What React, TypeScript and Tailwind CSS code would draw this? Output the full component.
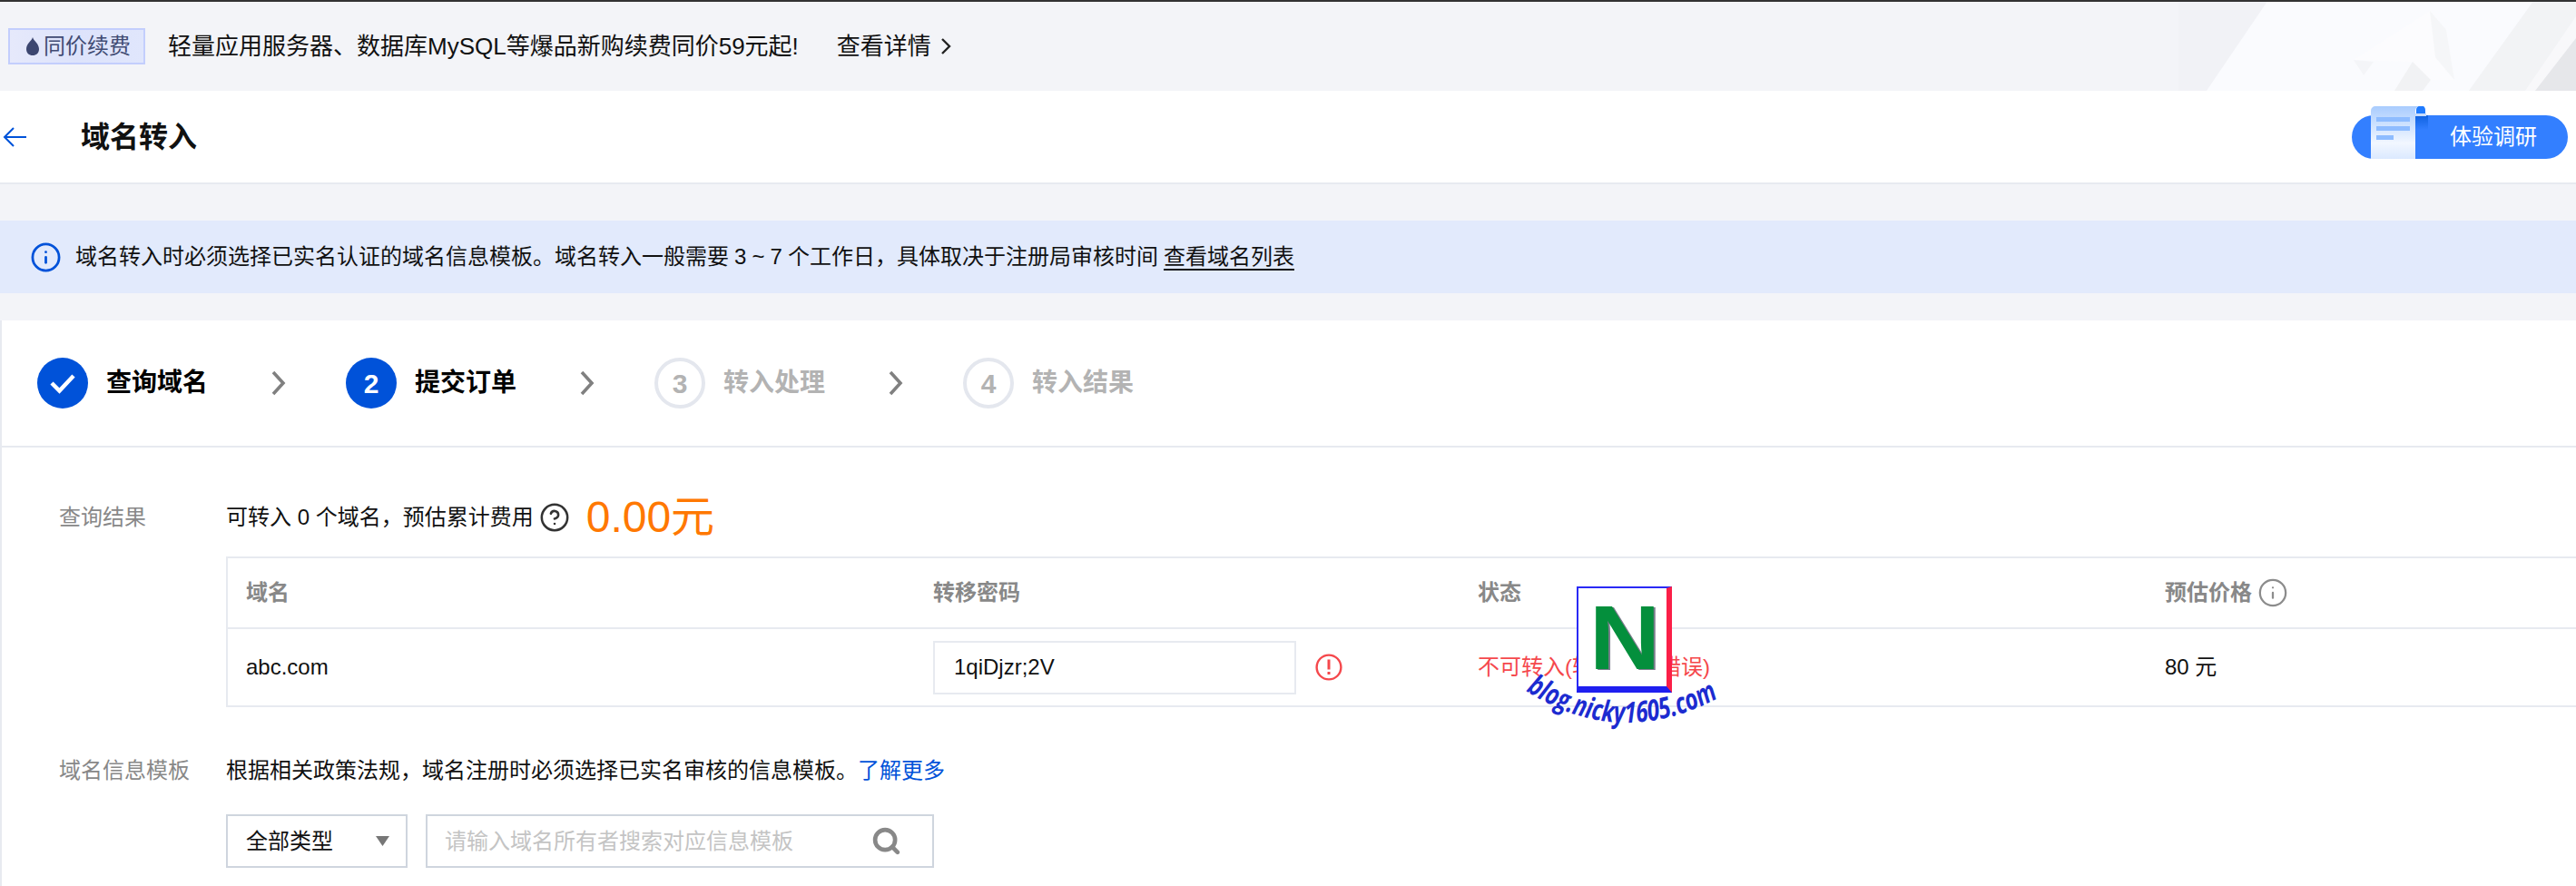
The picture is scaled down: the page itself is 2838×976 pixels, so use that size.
import { CircleHelp, Info, Search } from "lucide-react";

const steps = [
  { label: "查询域名", state: "done" },
  { label: "提交订单", state: "active", num: "2" },
  { label: "转入处理", state: "todo", num: "3" },
  { label: "转入结果", state: "todo", num: "4" },
];

// background art on the right of the banner
function BannerArt() {
  return (
    <svg className="absolute right-0 top-0 w-[438px] h-[98px]" viewBox="0 2 438 98">
      <polygon points="0,0 99,0 31,100 0,100" fill="#f1f2f6" />
      <polygon points="99,0 392,0 320,100 31,100" fill="#fafbfe" />
      <polygon points="392,0 438,0 438,18 382,100 320,100" fill="#f2f3f5" />
      <polygon points="438,18 438,42 393,100 382,100" fill="#f8f8fa" />
      <polygon points="438,42 438,100 393,100" fill="#e6e7ea" />
      <polygon points="193,66 277,12 295,33 304,88 278,88 269,100 238,100 258,68" fill="#fcfcfe" />
      <polygon points="277,12 295,33 304,88 283,63" fill="#f5f6f8" />
      <polygon points="193,66 215,68 204,83" fill="#f4f5f8" />
      <polygon points="258,68 238,100 269,100 278,88" fill="#f1f2f4" />
    </svg>
  );
}

function Step({ label, state, num, last }: { label: string; state: string; num?: string; last: boolean }) {
  const todo = state === "todo";
  return (
    <div className="flex items-center w-[340px] shrink-0">
      <div
        className={
          todo
            ? "w-[56px] h-[56px] rounded-full border-[4px] border-[#e4e7ee] flex items-center justify-center text-[30px] font-bold text-[#b3b3b3]"
            : "w-[56px] h-[56px] rounded-full bg-[#0052d9] flex items-center justify-center text-[30px] font-bold text-white"
        }
      >
        {state === "done" ? (
          <svg width="30" height="30" viewBox="0 0 30 30" fill="none" stroke="#fff" strokeWidth="4.5">
            <path d="M3 15 L11.5 23.5 L27 7" />
          </svg>
        ) : (
          num
        )}
      </div>
      <span className={todo ? "ml-[20px] w-[112px] text-[28px] font-bold text-[#b3b3b3]" : "ml-[20px] w-[112px] text-[28px] font-bold text-black"}>
        {label}
      </span>
      {!last && (
        <svg className="ml-[69px]" width="18" height="28" viewBox="0 0 18 28" fill="none" stroke="#808080" strokeWidth="3.6">
          <path d="M3 2 L14 14 L3 26" />
        </svg>
      )}
    </div>
  );
}

export default function App() {
  return (
    <div className="relative h-[976px] w-[2838px] overflow-hidden bg-[#f3f4f8] text-[24px] text-[#111] font-[family-name:'Liberation_Sans','Noto_Sans_CJK_SC',sans-serif]">
      <div className="h-[2px] bg-[#333]" />

      {/* top banner */}
      <div className="relative h-[98px] flex items-center pl-[9px] overflow-hidden">
        <BannerArt />
        <div className="h-[40px] w-[151px] flex items-center pl-[17px] border-2 border-[#c3cefd] bg-linear-to-r from-[#e6e9fb] via-[#dde3fb] to-[#e0e6fc] text-[#414b73]">
          <svg width="18" height="22" viewBox="0 0 18 22" fill="#3c4670" className="-ml-[1px] mr-[3px] shrink-0">
            <path d="M9 1 C10 5 16 8 16 14 C16 18.5 13 21 9 21 C5 21 2 18.5 2 14 C2 8 8 5 9 1 Z" />
          </svg>
          <span className="whitespace-nowrap">同价续费</span>
        </div>
        <span className="ml-[25px] text-[26px] text-[#111] whitespace-nowrap">轻量应用服务器、数据库MySQL等爆品新购续费同价59元起!</span>
        <span className="ml-[42px] text-[26px] text-[#111] whitespace-nowrap">查看详情</span>
        <svg className="ml-[10px]" width="12" height="20" viewBox="0 0 12 20" fill="none" stroke="#222" strokeWidth="2.4">
          <path d="M2 2 L10 10 L2 18" />
        </svg>
      </div>

      {/* page header */}
      <div className="h-[103px] bg-white border-b-2 border-[#e7eaf0] flex items-center pr-[9px]">
        <svg className="ml-[3px] shrink-0" width="26" height="24" viewBox="0 0 26 24" fill="none" stroke="#0052d9" strokeWidth="2">
          <path d="M12 2 L2 12 L12 22 M2 12 H26" />
        </svg>
        <h1 className="ml-[60px] text-[32px] font-bold text-[#111]">域名转入</h1>
        <div className="relative ml-auto h-[48px] w-[238px] rounded-full bg-[#337fff] flex items-center pl-[108px] text-white whitespace-nowrap">
          体验调研
          <svg className="absolute left-[21px] -top-[10px]" width="64" height="58" viewBox="0 0 64 58">
            <defs>
              <linearGradient id="paper" x1="0" y1="0" x2="0" y2="1">
                <stop offset="0" stopColor="#a9ccfe" />
                <stop offset="0.7" stopColor="#f2f7ff" />
                <stop offset="1" stopColor="#dbe9ff" />
              </linearGradient>
              <linearGradient id="curl" x1="0" y1="0" x2="0" y2="1">
                <stop offset="0" stopColor="#0f62e0" />
                <stop offset="1" stopColor="#337fff" />
              </linearGradient>
            </defs>
            <rect x="49" y="10" width="14" height="16" fill="url(#curl)" />
            <path d="M50 8 V4 A5 5 0 0 1 60 4 V8 Z" fill="#1f7bff" />
            <rect x="49" y="8" width="12" height="3" fill="#c8dcfb" />
            <path d="M0 58 V5 A5 5 0 0 1 5 0 H55 A5 5 0 0 0 49 5 V58 Z" fill="url(#paper)" />
            <rect x="6" y="12" width="37" height="5" fill="#8ebcff" />
            <rect x="6" y="22" width="37" height="5" fill="#8ebcff" />
            <rect x="6" y="32" width="19" height="5" fill="#8ebcff" />
          </svg>
        </div>
      </div>

      {/* notice */}
      <div className="mt-[40px] h-[80px] bg-[#e2eafc] flex items-center pl-[33px] whitespace-nowrap">
        <Info size={35} strokeWidth={1.9} color="#0052d9" className="shrink-0" />
        <span className="ml-[15px] [word-spacing:-0.6px]">域名转入时必须选择已实名认证的域名信息模板。域名转入一般需要 3 ~ 7 个工作日，具体取决于注册局审核时间</span>
        <span className="ml-[6px] underline decoration-2 underline-offset-[5px]">查看域名列表</span>
      </div>

      {/* main card */}
      <div className="mt-[30px] h-[623px] bg-white border-l-2 border-[#e7eaf0]">
        <div className="h-[140px] border-b-2 border-[#e7eaf0] flex items-center pl-[39px]">
          {steps.map((s, i) => (
            <Step key={s.label} label={s.label} state={s.state} num={s.num} last={i === steps.length - 1} />
          ))}
        </div>

        {/* query result */}
        <div className="flex pt-[40px]">
          <div className="w-[247px] shrink-0 pl-[63px] h-[74px] flex items-center text-[#888]">查询结果</div>
          <div className="flex-1">
            <div className="h-[74px] flex items-center whitespace-nowrap">
              <span>可转入 0 个域名，预估累计费用</span>
              <CircleHelp size={34} strokeWidth={1.8} color="#333" className="ml-[6px] shrink-0" />
              <span className="ml-[18px] text-[48px] text-[#ff7800]">0.00元</span>
            </div>
            <div className="mt-[6px] border-l-2 border-t-2 border-b-2 border-[#e7eaf0]">
              <div className="h-[78px] border-b-2 border-[#e7eaf0] grid grid-cols-[757px_600px_757px_1fr] items-center font-bold text-[#888]">
                <div className="pl-[20px]">域名</div>
                <div className="pl-[20px]">转移密码</div>
                <div className="pl-[20px]">状态</div>
                <div className="pl-[20px] flex items-center">
                  预估价格
                  <Info size={34} strokeWidth={1.6} color="#8c8c8c" className="ml-[6px]" />
                </div>
              </div>
              <div className="h-[84px] grid grid-cols-[757px_600px_757px_1fr] items-center">
                <div className="pl-[20px]">abc.com</div>
                <div className="pl-[20px] flex items-center">
                  <input
                    readOnly
                    value="1qiDjzr;2V"
                    className="h-[59px] w-[400px] border-2 border-[#e7eaf0] pl-[21px] outline-none text-[#111]"
                  />
                  <svg className="ml-[21px]" width="30" height="30" viewBox="0 0 30 30" fill="none" stroke="#f5484c" strokeWidth="2.4">
                    <circle cx="15" cy="15" r="13.4" />
                    <path d="M15 6.5 V17.5 M15 20 V23" strokeWidth="3" />
                  </svg>
                </div>
                <div className="pl-[20px] text-[#f5484c]">不可转入(转移密码错误)</div>
                <div className="pl-[20px]">80 元</div>
              </div>
            </div>
          </div>
        </div>

        {/* contact template */}
        <div className="flex mt-[46px]">
          <div className="w-[247px] shrink-0 pl-[63px] h-[48px] flex items-center text-[#888] whitespace-nowrap">域名信息模板</div>
          <div className="flex-1">
            <div className="h-[48px] flex items-center whitespace-nowrap">
              根据相关政策法规，域名注册时必须选择已实名审核的信息模板。
              <span className="text-[#0052d9]">了解更多</span>
            </div>
            <div className="mt-[24px] flex gap-[20px]">
              <div className="h-[59px] w-[200px] border-2 border-[#cfd5de] flex items-center pl-[20px] pr-[18px] justify-between">
                全部类型
                <svg width="15" height="11" viewBox="0 0 15 11" fill="#777">
                  <path d="M0 0 H15 L7.5 11 Z" />
                </svg>
              </div>
              <div className="h-[59px] w-[560px] border-2 border-[#cfd5de] flex items-center pl-[19px] pr-[34px] justify-between text-[#c4c4c4]">
                请输入域名所有者搜索对应信息模板
                <Search size={33} strokeWidth={3.4} color="#888" />
              </div>
            </div>
          </div>
        </div>
      </div>

      {/* watermark logo over the page */}
      <div className="absolute left-[1737px] top-[646px] w-[105px] h-[117px] bg-white border-l-2 border-t-2 border-b-[7px] border-r-[6px] border-l-[#2a2af5] border-t-[#2a2af5] border-b-[#1f1ff0] border-r-[#fb1f47]" />
      <svg className="absolute left-[1670px] top-[640px] w-[240px] h-[190px]" viewBox="1670 640 240 190">
        <text x="1751" y="737" fontFamily="Liberation Sans" fontWeight="bold" fontSize="100" textLength="78" lengthAdjust="spacingAndGlyphs" fill="#7c7c8c" dx="2" dy="1">
          N
        </text>
        <text x="1751" y="737" fontFamily="Liberation Sans" fontWeight="bold" fontSize="100" textLength="78" lengthAdjust="spacingAndGlyphs" fill="#048f3c">
          N
        </text>
        <path id="wm" d="M1681 761 Q1787 829 1900 765" fill="none" />
        <text fontFamily="Open Sans" fontWeight="bold" fontStyle="italic" fontSize="32" fill="#1c2bd0">
          <textPath href="#wm" textLength="224" lengthAdjust="spacingAndGlyphs">
            blog.nicky1605.com
          </textPath>
        </text>
      </svg>
    </div>
  );
}
